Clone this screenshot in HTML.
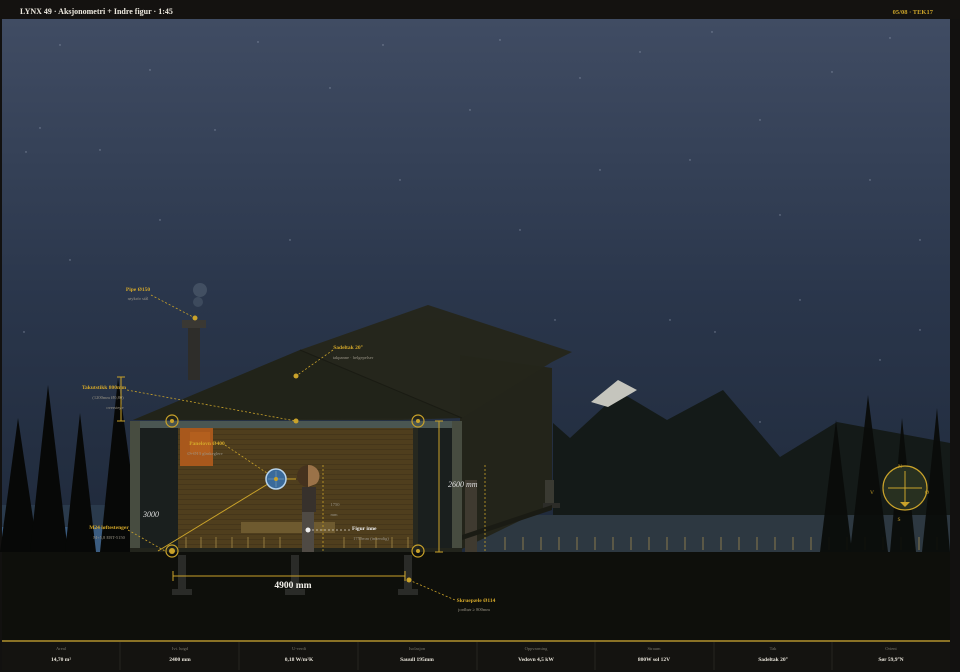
<!DOCTYPE html>
<html><head><meta charset="utf-8"><style>
html,body{margin:0;padding:0;background:#121110;width:960px;height:672px;overflow:hidden;font-family:"Liberation Serif",serif}
svg{display:block}
</style></head><body>
<svg width="960" height="672" viewBox="0 0 960 672" xmlns="http://www.w3.org/2000/svg" font-family="Liberation Serif, serif">
<defs>
<linearGradient id="sky" x1="0" y1="0" x2="0" y2="1">
<stop offset="0" stop-color="#404c63"/><stop offset="0.45" stop-color="#2a364b"/><stop offset="1" stop-color="#1b2535"/>
</linearGradient>
<pattern id="planks" width="10" height="5" patternUnits="userSpaceOnUse"><rect width="10" height="5" fill="#4f3e1d"/><rect y="4" width="10" height="1" fill="#45361a"/></pattern>
</defs>
<rect width="960" height="672" fill="#121110"/>
<rect x="0" y="0" width="960" height="19" fill="#141210"/>
<text x="20" y="14" fill="#eeeae0" font-size="8" font-weight="bold">LYNX 49 · Aksjonometri + Indre figur · 1:45</text>
<text x="933" y="14" fill="#c9a22a" font-size="6.5" font-weight="bold" text-anchor="end">05/08 · TEK17</text>
<rect x="2" y="19" width="948" height="621" fill="url(#sky)"/>
<g fill="#9aa4b8" opacity="0.7">
<circle cx="60" cy="45" r="0.7"/><circle cx="258" cy="42" r="0.7"/><circle cx="383" cy="45" r="0.7"/><circle cx="500" cy="40" r="0.7"/><circle cx="640" cy="52" r="0.7"/><circle cx="712" cy="32" r="0.7"/><circle cx="832" cy="72" r="0.7"/><circle cx="890" cy="38" r="0.7"/><circle cx="150" cy="70" r="0.7"/><circle cx="330" cy="88" r="0.7"/><circle cx="470" cy="110" r="0.7"/><circle cx="580" cy="78" r="0.7"/><circle cx="760" cy="120" r="0.7"/><circle cx="40" cy="128" r="0.7"/><circle cx="100" cy="150" r="0.7"/><circle cx="215" cy="130" r="0.7"/><circle cx="26" cy="152" r="0.7"/><circle cx="400" cy="180" r="0.7"/><circle cx="600" cy="170" r="0.7"/><circle cx="690" cy="160" r="0.7"/><circle cx="870" cy="180" r="0.7"/><circle cx="160" cy="220" r="0.7"/><circle cx="290" cy="240" r="0.7"/><circle cx="520" cy="230" r="0.7"/><circle cx="780" cy="215" r="0.7"/><circle cx="920" cy="240" r="0.7"/><circle cx="70" cy="260" r="0.7"/><circle cx="555" cy="320" r="0.7"/><circle cx="670" cy="320" r="0.7"/><circle cx="715" cy="332" r="0.7"/><circle cx="24" cy="332" r="0.7"/><circle cx="800" cy="300" r="0.7"/><circle cx="920" cy="330" r="0.7"/><circle cx="880" cy="360" r="0.7"/><circle cx="760" cy="422" r="0.7"/><circle cx="690" cy="468" r="0.7"/><circle cx="835" cy="500" r="0.7"/>
</g>
<polygon points="553,423 570,438 620,392 667,420 723,390 780,457 837,422 950,443 950,515 553,515" fill="#141a18"/>
<polygon points="591,402 618,380 637,390 608,407" fill="#c5c5bd"/>
<rect x="470" y="515" width="480" height="37" fill="#2d3841"/>
<rect x="2" y="505" width="150" height="47" fill="#2a3a4c"/>
<rect x="2" y="527" width="150" height="25" fill="#3b5c80"/>
<g fill="#070807">
<polygon points="18,418 0,552 38,552"/><polygon points="48,385 30,552 68,552"/><polygon points="80,413 65,552 96,552"/><polygon points="118,378 100,552 142,552"/><polygon points="143,430 135,552 155,552"/>
</g>
<polygon points="460,355 552,368 552,505 460,550" fill="#23241a"/>
<rect x="545" y="480" width="9" height="25" fill="#3a3a32"/>
<rect x="543" y="503" width="17" height="5" fill="#2c2c28"/>
<polygon points="133,420 300,350 428,305 572,352 552,362 462,418 400,420" fill="#25261a" opacity="0.95"/>
<polygon points="133,420 300,350 420,400 462,418" fill="#1f2118" opacity="0.6"/>
<line x1="300" y1="350" x2="462" y2="418" stroke="#1a1b13" stroke-width="1"/>
<rect x="182" y="320" width="24" height="8" fill="#3a3833"/>
<rect x="188" y="328" width="12" height="52" fill="#2e2d2a"/>
<circle cx="200" cy="290" r="7" fill="#5a6878" opacity="0.5"/><circle cx="198" cy="302" r="5" fill="#5a6878" opacity="0.4"/>
<rect x="140" y="428" width="312" height="124" fill="#1a1f1e"/>
<rect x="178" y="428" width="235" height="124" fill="url(#planks)"/>
<rect x="180" y="428" width="33" height="38" fill="#a8581c"/>
<rect x="190" y="432" width="20" height="22" fill="#bb6420" opacity="0.6"/>
<rect x="130" y="421" width="332" height="7" fill="#4a5652"/>
<rect x="130" y="421" width="10" height="131" fill="#474c40"/>
<rect x="452" y="421" width="10" height="131" fill="#474c40"/>
<rect x="413" y="428" width="5" height="124" fill="#26281f"/>
<rect x="465" y="480" width="12" height="72" fill="#3f3a30"/>
<polygon points="462,535 552,505 552,510 462,540" fill="#1a1b14"/>
<g stroke="#a48a4a" stroke-width="0.8">
<line x1="186" y1="537" x2="186" y2="550"/><line x1="201" y1="537" x2="201" y2="550"/><line x1="216" y1="537" x2="216" y2="550"/><line x1="232" y1="537" x2="232" y2="550"/><line x1="248" y1="537" x2="248" y2="550"/><line x1="264" y1="537" x2="264" y2="550"/><line x1="280" y1="537" x2="280" y2="550"/><line x1="344" y1="537" x2="344" y2="550"/><line x1="360" y1="537" x2="360" y2="550"/><line x1="376" y1="537" x2="376" y2="550"/><line x1="392" y1="537" x2="392" y2="550"/><line x1="408" y1="537" x2="408" y2="550"/>
</g>
<g stroke="#a08a50" stroke-width="0.8">
<line x1="505" y1="537" x2="505" y2="550"/><line x1="523" y1="537" x2="523" y2="550"/><line x1="541" y1="537" x2="541" y2="550"/><line x1="559" y1="537" x2="559" y2="550"/><line x1="577" y1="537" x2="577" y2="550"/><line x1="595" y1="537" x2="595" y2="550"/><line x1="613" y1="537" x2="613" y2="550"/><line x1="631" y1="537" x2="631" y2="550"/><line x1="649" y1="537" x2="649" y2="550"/><line x1="667" y1="537" x2="667" y2="550"/><line x1="685" y1="537" x2="685" y2="550"/><line x1="703" y1="537" x2="703" y2="550"/><line x1="721" y1="537" x2="721" y2="550"/><line x1="739" y1="537" x2="739" y2="550"/><line x1="757" y1="537" x2="757" y2="550"/><line x1="775" y1="537" x2="775" y2="550"/><line x1="793" y1="537" x2="793" y2="550"/><line x1="811" y1="537" x2="811" y2="550"/><line x1="829" y1="537" x2="829" y2="550"/><line x1="847" y1="537" x2="847" y2="550"/><line x1="865" y1="537" x2="865" y2="550"/><line x1="883" y1="537" x2="883" y2="550"/><line x1="901" y1="537" x2="901" y2="550"/><line x1="919" y1="537" x2="919" y2="550"/><line x1="937" y1="537" x2="937" y2="550"/>
</g>
<g fill="#0a0c0a" opacity="0.95">
<polygon points="836,420 820,552 852,552"/><polygon points="868,395 850,552 888,552"/><polygon points="902,418 890,552 916,552"/><polygon points="937,408 922,552 950,552"/>
</g>
<rect x="2" y="552" width="948" height="88" fill="#0e0f0b"/>
<rect x="130" y="548" width="332" height="4" fill="#22241c"/>
<rect x="241" y="522" width="94" height="11" fill="#6e5a2f"/>
<circle cx="308" cy="476" r="11" fill="#45321e"/>
<path d="M308,465 A11,11 0 0 1 316,484 L308,487 Z" fill="#9a7248"/>
<rect x="302" y="487" width="14" height="25" fill="#37312c"/>
<rect x="302" y="512" width="12" height="40" fill="#4f4a44"/>
<g fill="#2a2b28">
<rect x="178" y="555" width="8" height="35"/><rect x="291" y="555" width="8" height="35"/><rect x="404" y="555" width="8" height="35"/>
<rect x="172" y="589" width="20" height="6"/><rect x="285" y="589" width="20" height="6"/><rect x="398" y="589" width="20" height="6"/>
</g>
<g stroke="#c9a22a" fill="none" stroke-width="1">
<line x1="173" y1="576" x2="405" y2="576"/><line x1="173" y1="571" x2="173" y2="581"/><line x1="405" y1="571" x2="405" y2="581"/>
<line x1="439" y1="421" x2="439" y2="552"/><line x1="435" y1="421" x2="443" y2="421"/><line x1="435" y1="552" x2="443" y2="552"/>
<line x1="158" y1="551" x2="276" y2="479"/><line x1="276" y1="479" x2="296" y2="479"/>
<line x1="121" y1="377" x2="121" y2="421"/><line x1="117" y1="377" x2="125" y2="377"/><line x1="117" y1="421" x2="125" y2="421"/>
</g>
<g stroke="#c9a22a" fill="none" stroke-width="0.8" stroke-dasharray="2,2">
<line x1="323" y1="465" x2="323" y2="552"/><line x1="485" y1="465" x2="485" y2="552"/>
<line x1="151" y1="295" x2="195" y2="318"/><line x1="333" y1="350" x2="296" y2="376"/><line x1="127" y1="390" x2="296" y2="421"/><line x1="225" y1="445" x2="276" y2="479"/><line x1="128" y1="530" x2="165" y2="551"/><line x1="409" y1="580" x2="455" y2="600"/>
</g>
<line x1="308" y1="530" x2="350" y2="530" stroke="#e0d8c8" stroke-width="0.8" stroke-dasharray="2,2"/>
<circle cx="308" cy="530" r="2.5" fill="#eee"/>
<g fill="#c9a22a"><circle cx="195" cy="318" r="2.5"/><circle cx="296" cy="376" r="2.5"/><circle cx="296" cy="421" r="2.5"/><circle cx="409" cy="580" r="2.5"/></g>
<g stroke="#c9a22a" fill="none" stroke-width="1.2">
<circle cx="172" cy="421" r="6"/><circle cx="418" cy="421" r="6"/><circle cx="172" cy="551" r="6"/><circle cx="418" cy="551" r="6"/>
</g>
<g fill="#c9a22a"><circle cx="172" cy="421" r="2"/><circle cx="418" cy="421" r="2"/><circle cx="172" cy="551" r="3"/><circle cx="418" cy="551" r="2"/></g>
<circle cx="276" cy="479" r="10" fill="#3a6a9a" stroke="#b8d4ec" stroke-width="1.5"/>
<line x1="268" y1="479" x2="284" y2="479" stroke="#8ab" stroke-width="0.5"/><line x1="276" y1="471" x2="276" y2="487" stroke="#8ab" stroke-width="0.5"/>
<circle cx="276" cy="479" r="2" fill="#c9a22a"/>
<circle cx="905" cy="488" r="22" fill="#283020" stroke="#c9a22a" stroke-width="1.2"/>
<line x1="888" y1="488" x2="922" y2="488" stroke="#c9a22a"/><line x1="905" y1="471" x2="905" y2="505" stroke="#c9a22a"/>
<polygon points="900,502 910,502 905,507" fill="#c9a22a"/>
<g fill="#c9a22a" font-size="5.5" text-anchor="middle"><text x="900" y="468">N</text><text x="872" y="494">V</text><text x="927" y="494">Ø</text><text x="899" y="521">S</text></g>
<g font-size="5.5" font-weight="bold" fill="#d4a82a" text-anchor="middle">
<text x="138" y="291">Pipe Ø150</text><text x="348" y="349">Sadeltak 20°</text><text x="104" y="389">Takutstikk 800mm</text><text x="207" y="445">Panelovn Ø400</text><text x="109" y="529">M24 løftestenger</text><text x="476" y="602">Skruepæle Ø114</text>
</g>
<g font-size="4.5" fill="#9a9486" text-anchor="middle">
<text x="138" y="300">røykrör stål</text><text x="353" y="359">takpanne · helgepelser</text><text x="108" y="399">(1200mm Ø0,80)</text><text x="115" y="409">overstege</text><text x="205" y="455">Ø+Ø13 glaskeglere</text><text x="109" y="539">M+5,8 EBT-5150</text><text x="474" y="611">jordbør ≥ 800mm</text><text x="371" y="540">1750mm (innendig)</text><text x="335" y="506">1750</text><text x="334" y="516">mm</text>
</g>
<text x="352" y="530" font-size="5.5" font-weight="bold" fill="#eee">Figur inne</text>
<text x="143" y="517" font-size="8" font-style="italic" fill="#ddd">3000</text>
<text x="448" y="487" font-size="8" font-style="italic" fill="#ddd">2600 mm</text>
<text x="293" y="588" font-size="9.5" font-weight="bold" fill="#f2f0ea" text-anchor="middle">4900 mm</text>
<rect x="2" y="640" width="948" height="2" fill="#8a7226"/>
<rect x="2" y="642" width="948" height="28" fill="#141310"/>
<g stroke="#26251f"><line x1="120" y1="642" x2="120" y2="670"/><line x1="239" y1="642" x2="239" y2="670"/><line x1="358" y1="642" x2="358" y2="670"/><line x1="477" y1="642" x2="477" y2="670"/><line x1="595" y1="642" x2="595" y2="670"/><line x1="714" y1="642" x2="714" y2="670"/><line x1="832" y1="642" x2="832" y2="670"/></g>
<g font-size="4.5" fill="#7a766a" text-anchor="middle">
<text x="61" y="650">Areal</text><text x="180" y="650">Ivt. høgd</text><text x="299" y="650">U-verdi</text><text x="417" y="650">Isolasjon</text><text x="536" y="650">Oppvarming</text><text x="654" y="650">Straum</text><text x="773" y="650">Tak</text><text x="891" y="650">Orient</text>
</g>
<g font-size="5.5" font-weight="bold" fill="#e6e2d8" text-anchor="middle">
<text x="61" y="661">14,70 m²</text><text x="180" y="661">2400 mm</text><text x="299" y="661">0,18 W/m²K</text><text x="417" y="661">Sauull 195mm</text><text x="536" y="661">Vedovn 4,5 kW</text><text x="654" y="661">800W sol 12V</text><text x="773" y="661">Sadeltak 20°</text><text x="891" y="661">Sør 59,9°N</text>
</g>
</svg>
</body></html>
